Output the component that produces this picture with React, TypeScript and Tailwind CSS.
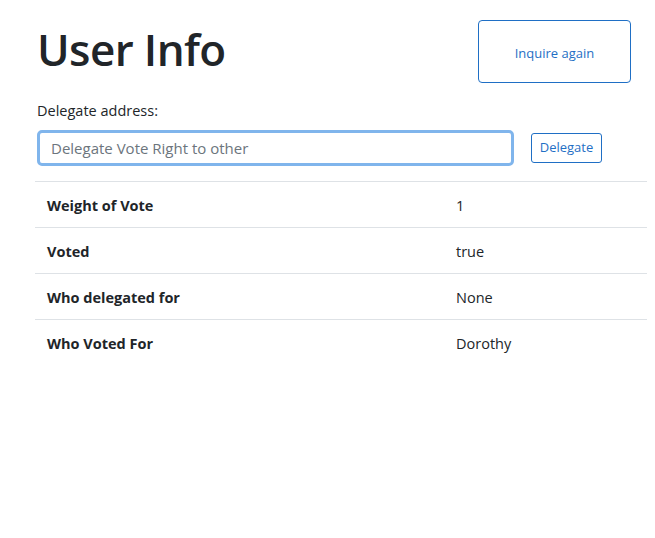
const rows = [
  { label: 'Weight of Vote', value: '1' },
  { label: 'Voted', value: 'true' },
  { label: 'Who delegated for', value: 'None' },
  { label: 'Who Voted For', value: 'Dorothy' },
];

export default function App() {
  return (
    <div className="min-h-[538px] bg-white pl-[35px] pr-2 text-[#212529] font-['Segoe_UI','Open_Sans',sans-serif]">
      {/* Header */}
      <div className="flex items-start justify-between pt-5 pr-[16px]">
        <h1 className="pl-[2px] pt-[1px] text-[44px] font-semibold leading-[56px] tracking-[-0.6px]">User Info</h1>
        <button className="h-[63px] w-[153px] rounded-[4px] border border-[#1f6fc5] pt-[4px] text-[13px] text-[#1f6fc5]">
          Inquire again
        </button>
      </div>

      {/* Delegate form */}
      <div className="pl-[2px] pt-[19px]">
        <p className="text-[14.5px] leading-[18px] text-[#212529]">Delegate address:</p>
        <div className="mt-[10px] flex items-center">
          <input
            className="h-[36px] w-[477px] rounded-[5px] border-[3px] border-[#80b5ec] px-[11px] text-[15px] text-[#495057] outline-none placeholder:text-[#6c757d]"
            placeholder="Delegate Vote Right to other"
          />
          <button className="ml-[17px] h-[30px] w-[71px] rounded-[3px] border border-[#1f6fc5] text-[13px] text-[#1f6fc5]">
            Delegate
          </button>
        </div>
      </div>

      {/* Info table */}
      <div className="mt-[15px] w-[612px] border-t border-[#dee2e6]">
        {rows.map((row, i) => (
          <div
            key={row.label}
            className={`grid h-[46px] grid-cols-[409px_1fr] items-center pt-[2px] text-[14.5px] ${
              i < rows.length - 1 ? 'border-b border-[#dee2e6]' : ''
            }`}
          >
            <span className="pl-3 font-bold">{row.label}</span>
            <span className="pl-3">{row.value}</span>
          </div>
        ))}
      </div>
    </div>
  );
}
